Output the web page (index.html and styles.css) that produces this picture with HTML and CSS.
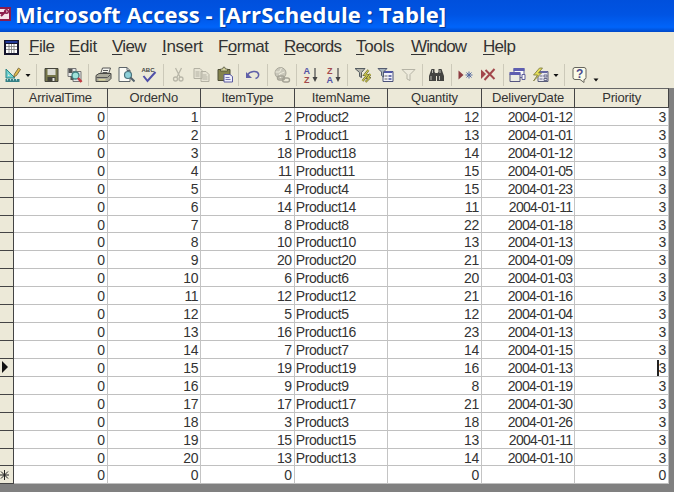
FILE: index.html
```
<!DOCTYPE html>
<html lang="en">
    <head>
        <meta charset="UTF-8" />
        <title>Microsoft Access - [ArrSchedule : Table]</title>
        <link rel="stylesheet" href="styles.css">
    </head>

    <body>
        <div class="window">
            <header class="titlebar">
                <svg class="app-icon" width="12" height="16" viewBox="0 0 12 16">
                    <path d="M0 1h11v14H0z" fill="#8c1c4c" />
                    <path d="M0 3h9v10H0z" fill="#f5e3ea" />
                    <path d="M1 10l5-5M0 7h4" stroke="#8c1c4c" stroke-width="2" />
                    <circle cx="6.5" cy="5.5" r="1.8" fill="none" stroke="#8c1c4c" stroke-width="1.4" />
                </svg>
                <h1>Microsoft Access - [ArrSchedule : Table]</h1>
            </header>

            <nav class="menubar">
                <svg class="table-icon" width="15" height="15" viewBox="0 0 15 15">
                    <path d="M0 0h15v15H0z" fill="#15152c" />
                    <path d="M1.5 1h12v2h-12z" fill="#223a9a" />
                    <path d="M2 4h11v9H2z" fill="#fff" />
                    <path d="M2 6.5h11M2 9.5h11M5 4v9M7.5 4v9M10 4v9" stroke="#777" stroke-width=".8" />
                </svg>
                <a class="file"><u>F</u>ile</a>
                <a class="edit"><u>E</u>dit</a>
                <a class="view"><u>V</u>iew</a>
                <a class="insert"><u>I</u>nsert</a>
                <a class="format">F<u>o</u>rmat</a>
                <a class="records"><u>R</u>ecords</a>
                <a class="tools"><u>T</u>ools</a>
                <a class="win"><u>W</u>indow</a>
                <a class="help"><u>H</u>elp</a>
            </nav>

            <div class="toolbar">
                <!-- design view -->
                <svg class="icon" viewBox="0 0 18 18">
                    <path d="M2.5 3v9h9z" fill="#6fd0d0" stroke="#2c8585" />
                    <path d="M4.500 8v2h2z" fill="#ecead9" />
                    <path d="M2 13h14v3H2z" fill="#347f85" />
                    <path d="M4 13v1.500M7 13v1.500M10 13v1.500M13 13v1.500" stroke="#b8e5e5" />
                    <path d="M10 11l1-3 4-6 2 1.500-4 6z" fill="#e0bd50" stroke="#6b5a31" stroke-width=".8" />
                </svg>
                <svg class="drop" viewBox="0 0 8 18"><path d="M1.500 8h5L4 11z" fill="#111" /></svg>
                <i class="sep"></i>
                <!-- save -->
                <svg class="icon" viewBox="0 0 18 18">
                    <path d="M2.500 2.500h13v13h-13z" fill="#77774a" stroke="#44443c" />
                    <path d="M5 3h8v6H5z" fill="#dcdcd4" />
                    <path d="M5 11h8v5H5z" fill="#44443c" />
                    <path d="M10 12h2v3h-2z" fill="#e6e6df" />
                </svg>
                <!-- file search -->
                <svg class="icon" viewBox="0 0 18 18">
                    <path d="M2.500 2.500h8v8h-8zM7.500 5.500h8v10h-8z" fill="#e8e8e8" stroke="#777" />
                    <path d="M3 3h4v4H3zM5 10h3v4H5z" fill="#555" />
                    <circle cx="10" cy="9.500" r="3.500" fill="#9fe2da" stroke="#3f7f80" stroke-width="1.300" />
                    <path d="M12.500 12l3.500 4" stroke="#c33b43" stroke-width="2.500" />
                </svg>
                <i class="sep"></i>
                <!-- print -->
                <svg class="icon" viewBox="0 0 18 18">
                    <path d="M6 8l2-6h8l-2 6z" fill="#f5f5ee" stroke="#555" />
                    <path d="M1.500 9.500l3-2h12v5l-3 3h-12z" fill="#aaa99b" stroke="#4a4a46" />
                    <path d="M2 11.500h11l3-3M8.500 4.500h5M8 6.500h5" stroke="#555" fill="none" />
                    <path d="M4 13h7v1.500H4z" fill="#d8d49a" />
                </svg>
                <!-- print preview -->
                <svg class="icon" viewBox="0 0 18 18">
                    <path d="M1.500 1.500h8l3 3v11h-11z" fill="#fbfbf6" stroke="#5d6469" />
                    <path d="M9.500 1.500v3h3" fill="none" stroke="#5d6469" />
                    <circle cx="10.500" cy="9" r="3.500" fill="#8ed1d9" stroke="#4a737d" stroke-width="1.200" />
                    <path d="M13 11.500l4 4" stroke="#53616b" stroke-width="2" />
                </svg>
                <!-- spelling -->
                <svg class="icon" viewBox="0 0 18 18">
                    <text class="abc" x="1" y="6" textLength="13">ABC</text>
                    <path d="M3 10l4 5 8-9" fill="none" stroke="#5050a8" stroke-width="2" />
                </svg>
                <i class="sep"></i>
                <!-- cut -->
                <svg class="icon" viewBox="0 0 18 18">
                    <path d="M6 2l4.500 9M12 2l-4.500 9" stroke="#b8b6a8" stroke-width="1.300" />
                    <circle cx="6" cy="13" r="2" fill="none" stroke="#b8b6a8" stroke-width="1.300" />
                    <circle cx="11.500" cy="13" r="2" fill="none" stroke="#b8b6a8" stroke-width="1.300" />
                </svg>
                <!-- copy -->
                <svg class="icon" viewBox="0 0 18 18">
                    <path d="M1.500 2.500h6l2 2v8h-8zM8.500 5.500h5l3 3v7h-8z" fill="#e6e3d4" stroke="#b3b1a3" />
                    <path d="M3 6h4M3 8h4M3 10h4M10 9h4M10 11h5M10 13h5" stroke="#b3b1a3" />
                </svg>
                <!-- paste -->
                <svg class="icon" viewBox="0 0 18 18">
                    <path d="M2.500 3.500h12v11h-12z" fill="#83824d" stroke="#4f4f38" />
                    <path d="M5 5V3h2l1-2h1l1 2h2v2z" fill="#d8d6a0" stroke="#4f4f38" stroke-width=".8" />
                    <path d="M8.500 8.500h6l2.500 2v5.500H8.500z" fill="#eeeefb" stroke="#5b5aa0" />
                    <path d="M10 11.500h4M10 13.500h5" stroke="#7776b4" />
                </svg>
                <i class="sep"></i>
                <!-- undo -->
                <svg class="icon" viewBox="0 0 18 18">
                    <path d="M4 9c2-4 10-5 11-1 .5 2-1 4-3 4.500" fill="none" stroke="#6060a8" stroke-width="1.600" />
                    <path d="M2.500 6v6h6z" fill="#6060a8" />
                </svg>
                <i class="sep"></i>
                <!-- hyperlink -->
                <svg class="icon" viewBox="0 0 18 18">
                    <circle cx="8" cy="7" r="5.500" fill="#c9c7ba" stroke="#aaa89b" />
                    <path d="M3 6h4l2-4M8 12l-1-4 5-2" fill="none" stroke="#efedde" />
                    <rect x="5" y="10" width="7" height="4" rx="2" fill="none" stroke="#a5a396" stroke-width="1.400" />
                    <rect x="10" y="12" width="7" height="4" rx="2" fill="none" stroke="#a5a396" stroke-width="1.400" />
                </svg>
                <i class="sep"></i>
                <!-- sort ascending -->
                <svg class="icon" viewBox="0 0 18 18">
                    <text class="letter blue" x="2" y="8">A</text>
                    <text class="letter red" x="2.500" y="17">Z</text>
                    <path d="M13.500 2v11" stroke="#555" stroke-width="1.300" />
                    <path d="M11 11h5l-2.500 5z" fill="#444" />
                </svg>
                <!-- sort descending -->
                <svg class="icon" viewBox="0 0 18 18">
                    <text class="letter red" x="2.500" y="8">Z</text>
                    <text class="letter blue" x="2" y="17">A</text>
                    <path d="M13.500 2v11" stroke="#555" stroke-width="1.300" />
                    <path d="M11 11h5l-2.500 5z" fill="#444" />
                </svg>
                <i class="sep"></i>
                <!-- filter by selection -->
                <svg class="icon" viewBox="0 0 18 18">
                    <path d="M1.500 2.500h10L8 6.500v5l-2-1v-4z" fill="#b0b0a8" stroke="#555c61" />
                    <path d="M15 4l-4 5h3l-5 6M17 8l-3 4h2l-4 4" fill="none" stroke="#77733a" stroke-width="2.200" />
                    <path d="M15 4l-4 5h3l-5 6M17 8l-3 4h2l-4 4" fill="none" stroke="#dfdc50" />
                </svg>
                <!-- filter by form -->
                <svg class="icon" viewBox="0 0 18 18">
                    <path d="M6.500 5.500h10v10h-10z" fill="#f2f2fb" stroke="#4b5279" />
                    <path d="M7 5h9v2H7z" fill="#5057a5" />
                    <path d="M8 10h3M8 13h3" stroke="#666" />
                    <path d="M12 9h3v2h-3zM12 12h3v2h-3z" fill="#6d74ad" />
                    <path d="M1.500 2.500h9L7 6v5L5 9.500V6z" fill="#a7b3bb" stroke="#555c70" />
                </svg>
                <!-- apply filter -->
                <svg class="icon" viewBox="0 0 18 18">
                    <path d="M2.500 3.500h13l-5 5v6l-3-1.500V8.500z" fill="#eeebdd" stroke="#b5b3a5" />
                </svg>
                <i class="sep"></i>
                <!-- find -->
                <svg class="icon" viewBox="0 0 18 18">
                    <path d="M4 3h3v3l1.500 1.500V15H1.500v-5zM14 3h-3v3L9.500 7.500V15h7v-5z" fill="#444441" />
                    <path d="M8 7h2v3H8z" fill="#444441" />
                    <path d="M3.500 10v4M12 10v4M5 4v3M12.500 4v3" stroke="#b9b9b1" />
                </svg>
                <i class="sep"></i>
                <!-- new record -->
                <svg class="icon" viewBox="0 0 18 18">
                    <path d="M2 4.500l5 4.500-5 4.500z" fill="#8d3b40" />
                    <path d="M12.500 5.500v7M9 9h7M10 6.500l5 5M15 6.500l-5 5" stroke="#5368a0" />
                </svg>
                <!-- delete record -->
                <svg class="icon" viewBox="0 0 18 18">
                    <path d="M1.500 3.500L6.500 8l-5 5z" fill="#a3474b" />
                    <path d="M6 4l9 9M15 3L5 14" stroke="#a3474b" stroke-width="2" />
                </svg>
                <i class="sep"></i>
                <!-- database window -->
                <svg class="icon" viewBox="0 0 18 18">
                    <path d="M5.500 2.500h10v9h-10z" fill="#fafafa" stroke="#5e5e9b" />
                    <path d="M5 2h11v3H5z" fill="#5e5eb0" />
                    <path d="M1.500 7.500h10v8h-10z" fill="#ecece4" stroke="#555580" />
                    <path d="M1 6h11v3H1z" fill="#5e5eb0" />
                    <path d="M13.500 8.500h3v5h-3z" fill="#fafafa" stroke="#5e5e9b" />
                </svg>
                <!-- new object -->
                <svg class="icon" viewBox="0 0 18 18">
                    <path d="M6.500 5.500h10v10h-10z" fill="#e8e8ef" stroke="#595d78" />
                    <path d="M7 5h9v2H7z" fill="#6467a2" />
                    <path d="M8 10h3M8 13h3M12.500 9h3v2h-3zM12.500 12.500h3v2h-3z" stroke="#686b8b" fill="none" />
                    <path d="M8 2L2 9h4l-4 6 8-8H7l4-5z" fill="#e5df57" stroke="#77743d" stroke-width=".8" />
                </svg>
                <svg class="drop" viewBox="0 0 8 18"><path d="M1.500 8h5L4 11z" fill="#111" /></svg>
                <i class="sep"></i>
                <!-- help -->
                <svg class="icon" viewBox="0 0 18 18">
                    <path d="M4.500 1.500h9q2 0 2 2v8q0 2-2 2v3l-4-3h-5q-2 0-2-2v-8q0-2 2-2z" fill="#fbfae8" stroke="#66655d" />
                    <text class="question" x="5.500" y="12">?</text>
                </svg>
                <svg class="drop more" viewBox="0 0 8 18"><path d="M1.500 12.500h5L4 15.500z" fill="#111" /></svg>
            </div>

            <main class="sheet">
                <table>
                    <thead>
                        <tr><th></th><th>ArrivalTime</th><th>OrderNo</th><th>ItemType</th><th>ItemName</th><th>Quantity</th><th>DeliveryDate</th><th>Priority</th></tr>
                    </thead>
                    <tbody>
                        <tr><th></th><td>0</td><td>1</td><td>2</td><td>Product2</td><td>12</td><td>2004-01-12</td><td>3</td></tr>
                        <tr><th></th><td>0</td><td>2</td><td>1</td><td>Product1</td><td>13</td><td>2004-01-01</td><td>3</td></tr>
                        <tr><th></th><td>0</td><td>3</td><td>18</td><td>Product18</td><td>14</td><td>2004-01-12</td><td>3</td></tr>
                        <tr><th></th><td>0</td><td>4</td><td>11</td><td>Product11</td><td>15</td><td>2004-01-05</td><td>3</td></tr>
                        <tr><th></th><td>0</td><td>5</td><td>4</td><td>Product4</td><td>15</td><td>2004-01-23</td><td>3</td></tr>
                        <tr><th></th><td>0</td><td>6</td><td>14</td><td>Product14</td><td>11</td><td>2004-01-11</td><td>3</td></tr>
                        <tr><th></th><td>0</td><td>7</td><td>8</td><td>Product8</td><td>22</td><td>2004-01-18</td><td>3</td></tr>
                        <tr><th></th><td>0</td><td>8</td><td>10</td><td>Product10</td><td>13</td><td>2004-01-13</td><td>3</td></tr>
                        <tr><th></th><td>0</td><td>9</td><td>20</td><td>Product20</td><td>21</td><td>2004-01-09</td><td>3</td></tr>
                        <tr><th></th><td>0</td><td>10</td><td>6</td><td>Product6</td><td>20</td><td>2004-01-03</td><td>3</td></tr>
                        <tr><th></th><td>0</td><td>11</td><td>12</td><td>Product12</td><td>21</td><td>2004-01-16</td><td>3</td></tr>
                        <tr><th></th><td>0</td><td>12</td><td>5</td><td>Product5</td><td>12</td><td>2004-01-04</td><td>3</td></tr>
                        <tr><th></th><td>0</td><td>13</td><td>16</td><td>Product16</td><td>23</td><td>2004-01-13</td><td>3</td></tr>
                        <tr><th></th><td>0</td><td>14</td><td>7</td><td>Product7</td><td>14</td><td>2004-01-15</td><td>3</td></tr>
                        <tr><th><svg width="8" height="12" viewBox="0 0 8 12"><path d="M2 0l6 6-6 6z" fill="#111" /></svg></th><td>0</td><td>15</td><td>19</td><td>Product19</td><td>16</td><td>2004-01-13</td><td><span class="caret">3</span></td></tr>
                        <tr><th></th><td>0</td><td>16</td><td>9</td><td>Product9</td><td>8</td><td>2004-01-19</td><td>3</td></tr>
                        <tr><th></th><td>0</td><td>17</td><td>17</td><td>Product17</td><td>21</td><td>2004-01-30</td><td>3</td></tr>
                        <tr><th></th><td>0</td><td>18</td><td>3</td><td>Product3</td><td>18</td><td>2004-01-26</td><td>3</td></tr>
                        <tr><th></th><td>0</td><td>19</td><td>15</td><td>Product15</td><td>13</td><td>2004-01-11</td><td>3</td></tr>
                        <tr><th></th><td>0</td><td>20</td><td>13</td><td>Product13</td><td>14</td><td>2004-01-10</td><td>3</td></tr>
                        <tr><th><svg width="9" height="10" viewBox="0 0 9 10"><path d="M4.500 0v10M0 5h9M1 1.500l7 7M8 1.500l-7 7" stroke="#222" /></svg></th><td>0</td><td>0</td><td>0</td><td></td><td>0</td><td></td><td>0</td></tr>
                    </tbody>
                </table>
            </main>
        </div>
    </body>
</html>
```
FILE: styles.css
```
body {
    margin: 0;
    background-color: #fff;
    font-family: "Liberation Sans", Arial, sans-serif;
    overflow: hidden;
}

.window {
    display: flex;
    flex-direction: column;
    width: 674px;
    height: 492px;
    background-color: #ece9d8;
}

.titlebar {
    display: flex;
    align-items: center;
    height: 32px;
    box-sizing: border-box;
    padding-bottom: 4px;
    background: linear-gradient(#0050dc, #0054e3 45%, #0064fa 85%, #0048c8);
}

.app-icon {
    margin-right: 3px;
}

h1 {
    margin: 0;
    color: #fff;
    font: bold 22px/28px "Open Sans", sans-serif;
    letter-spacing: 0.08px;
    white-space: nowrap;
    text-shadow: 1px 1px 1px #003a9c;
}

/* menu */
.menubar {
    display: flex;
    align-items: center;
    height: 30px;
    padding-left: 4px;
    font-size: 17px;
    letter-spacing: -0.9px;
    color: #333;
}

.menubar a {
    white-space: nowrap;
}

.menubar u {
    text-underline-offset: 2px;
    text-decoration-thickness: 1px;
}

.table-icon {
    width: 15px;
    margin-right: 10px;
}

.file {
    width: 40px;
    letter-spacing: -0.5px;
}

.edit {
    width: 43px;
    letter-spacing: -0.4px;
}

.view {
    width: 50px;
    letter-spacing: -0.7px;
}

.insert {
    width: 56px;
    letter-spacing: -0.3px;
}

.format {
    width: 66px;
    letter-spacing: -0.6px;
}

.records {
    width: 72px;
}

.tools {
    width: 55px;
    letter-spacing: -0.3px;
}

.win {
    width: 72px;
}

.help {
    letter-spacing: -0.7px;
}

/* toolbar */
.toolbar {
    display: flex;
    align-items: center;
    height: 26px;
    padding-left: 1px;
}

.icon {
    width: 18px;
    height: 18px;
    padding: 0 2.5px;
    flex: none;
}

.drop {
    width: 8px;
    height: 18px;
    flex: none;
}

.sep {
    width: 1px;
    height: 22px;
    margin: 0 2.4px;
    background-color: #ccc9b9;
    flex: none;
}

.drop + .sep {
    margin: 0 3px 0 4px;
}

.more {
    margin-left: 1px;
}

.abc {
    font: bold 6px "Liberation Sans", sans-serif;
    fill: #444;
}

.letter {
    font: bold 9px "Liberation Sans", sans-serif;
}

.blue {
    fill: #5353a5;
}

.red {
    fill: #a34a4d;
}

.question {
    font: bold 12px "Liberation Sans", sans-serif;
    fill: #4a4a8f;
}

/* datasheet */
.sheet {
    flex: 1;
    background-color: #808080;
}

table {
    display: block;
    width: 669px;
    font-size: 14px;
    color: #333;
}

thead,
tbody {
    display: block;
}

tr {
    display: grid;
    grid-template-columns: 14px repeat(7, 93.57px);
    grid-template-rows: 100%;
    height: 17.93px;
}

th,
td {
    box-sizing: border-box;
    padding: 0 2px;
    border-right: 1px solid #c4c4c4;
    border-bottom: 1px solid #c0c0c0;
    background-color: #fff;
    line-height: 18px;
    text-align: right;
    white-space: nowrap;
    letter-spacing: -0.4px;
}

td:nth-child(5) {
    padding-left: 1px;
    text-align: left;
}

td:nth-child(7) {
    letter-spacing: -0.7px;
}

th {
    display: flex;
    align-items: center;
    padding: 0;
    border-color: #444;
    background-color: #ece9d8;
    font-weight: normal;
}

thead tr {
    height: 20px;
}

thead th {
    justify-content: center;
    border-top: 1px solid #666;
    font-size: 13px;
    letter-spacing: -0.2px;
}

.caret {
    border-left: 2px solid #222;
    margin-left: -2px;
}
```
